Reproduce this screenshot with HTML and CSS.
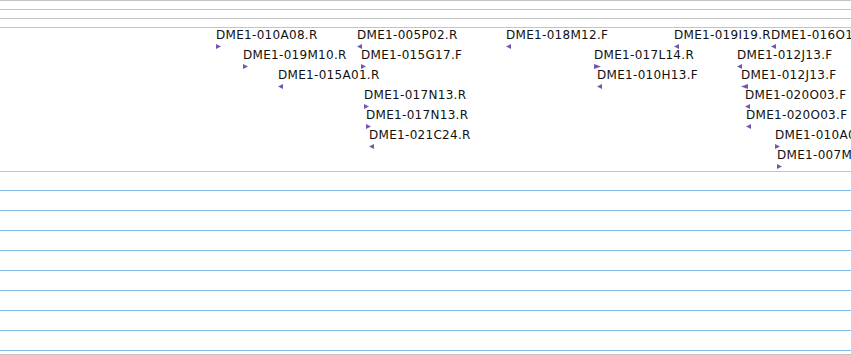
FILE: index.html
```html
<!DOCTYPE html>
<html>
<head>
<meta charset="utf-8">
<link rel="stylesheet" href="styles.css">
</head>
<body>
<div class="page">
  <div class="ruler">
    <div class="tick-row"></div>
    <div class="tick-row"></div>
    <div class="tick-row"></div>
  </div>
  <div class="track">
    <div class="feat" style="left:216px;top:1px"><span class="lbl">DME1-010A08.R</span><svg class="mk" width="5" height="5"><polygon points="0,0 5,2.5 0,5"/></svg></div>
    <div class="feat" style="left:357px;top:1px"><span class="lbl">DME1-005P02.R</span><svg class="mk" width="5" height="5"><polygon points="5,0 0,2.5 5,5"/></svg></div>
    <div class="feat" style="left:506px;top:1px"><span class="lbl">DME1-018M12.F</span><svg class="mk" width="5" height="5"><polygon points="5,0 0,2.5 5,5"/></svg></div>
    <div class="feat" style="left:674px;top:1px"><span class="lbl">DME1-019I19.R</span><svg class="mk" width="5" height="5"><polygon points="5,0 0,2.5 5,5"/></svg></div>
    <div class="feat" style="left:771px;top:1px"><span class="lbl">DME1-016O18.F</span><svg class="mk" width="5" height="5"><polygon points="5,0 0,2.5 5,5"/></svg></div>

    <div class="feat" style="left:243px;top:21px"><span class="lbl">DME1-019M10.R</span><svg class="mk" width="5" height="5"><polygon points="0,0 5,2.5 0,5"/></svg></div>
    <div class="feat" style="left:361px;top:21px"><span class="lbl">DME1-015G17.F</span><svg class="mk" width="5" height="5"><polygon points="0,0 5,2.5 0,5"/></svg></div>
    <div class="feat" style="left:594px;top:21px"><span class="lbl">DME1-017L14.R</span><svg class="mk" width="7" height="5"><polygon points="0,0 7,2.5 0,5"/></svg></div>
    <div class="feat" style="left:737px;top:21px"><span class="lbl">DME1-012J13.F</span><svg class="mk" width="5" height="5"><polygon points="5,0 0,2.5 5,5"/></svg></div>

    <div class="feat" style="left:278px;top:41px"><span class="lbl">DME1-015A01.R</span><svg class="mk" width="5" height="5"><polygon points="5,0 0,2.5 5,5"/></svg></div>
    <div class="feat" style="left:597px;top:41px"><span class="lbl">DME1-010H13.F</span><svg class="mk" width="5" height="5"><polygon points="5,0 0,2.5 5,5"/></svg></div>
    <div class="feat" style="left:741px;top:41px"><span class="lbl">DME1-012J13.F</span><svg class="mk" width="7" height="5"><polygon points="7,0 0,2.5 7,5"/></svg></div>

    <div class="feat" style="left:364px;top:61px"><span class="lbl">DME1-017N13.R</span><svg class="mk" width="5" height="5"><polygon points="0,0 5,2.5 0,5"/></svg></div>
    <div class="feat" style="left:745px;top:61px"><span class="lbl">DME1-020O03.F</span><svg class="mk" width="5" height="5"><polygon points="5,0 0,2.5 5,5"/></svg></div>

    <div class="feat" style="left:366px;top:81px"><span class="lbl">DME1-017N13.R</span><svg class="mk" width="5" height="5"><polygon points="0,0 5,2.5 0,5"/></svg></div>
    <div class="feat" style="left:746px;top:81px"><span class="lbl">DME1-020O03.F</span><svg class="mk" width="5" height="5"><polygon points="5,0 0,2.5 5,5"/></svg></div>

    <div class="feat" style="left:369px;top:101px"><span class="lbl">DME1-021C24.R</span><svg class="mk" width="5" height="5"><polygon points="5,0 0,2.5 5,5"/></svg></div>
    <div class="feat" style="left:775px;top:101px"><span class="lbl">DME1-010A02.R</span><svg class="mk" width="5" height="5"><polygon points="0,0 5,2.5 0,5"/></svg></div>

    <div class="feat" style="left:777px;top:121px"><span class="lbl">DME1-007M14.R</span><svg class="mk" width="5" height="5"><polygon points="0,0 5,2.5 0,5"/></svg></div>
  </div>
  <div class="lanes">
    <div class="lane-gap"></div>
    <div class="lane"></div>
    <div class="lane"></div>
    <div class="lane"></div>
    <div class="lane"></div>
    <div class="lane"></div>
    <div class="lane"></div>
    <div class="lane"></div>
    <div class="lane"></div>
    <div class="lane lane-last"></div>
  </div>
</div>
</body>
</html>
```

FILE: styles.css
```css
html, body {
  margin: 0;
  padding: 0;
  background: #ffffff;
}
.page {
  width: 851px;
  height: 355px;
  overflow: hidden;
  display: flex;
  flex-direction: column;
}
.ruler {
  display: flex;
  flex-direction: column;
}
.tick-row {
  height: 8px;
  border-top: 1px solid #c4c4c4;
}
.track {
  position: relative;
  height: 143px;
  flex: none;
  border-top: 1px solid #c4c4c4;
  border-bottom: 1px solid #c4c4c4;
}
.feat {
  position: absolute;
  display: flex;
  flex-direction: column;
  align-items: flex-start;
  white-space: nowrap;
}
.lbl {
  font-family: "DejaVu Sans", sans-serif;
  font-size: 12px;
  line-height: 13px;
  color: #111111;
  letter-spacing: 0.3px;
}
.mk {
  display: block;
  margin-top: 2px;
  fill: #7256b5;
}
.lanes {
  display: flex;
  flex-direction: column;
  flex: none;
}
.lane-gap {
  height: 18px;
}
.lane {
  height: 19px;
  border-top: 1px solid #85bde6;
}
.lane-last {
  height: 3px;
  border-bottom: 1px solid #c4c4c4;
}
```
